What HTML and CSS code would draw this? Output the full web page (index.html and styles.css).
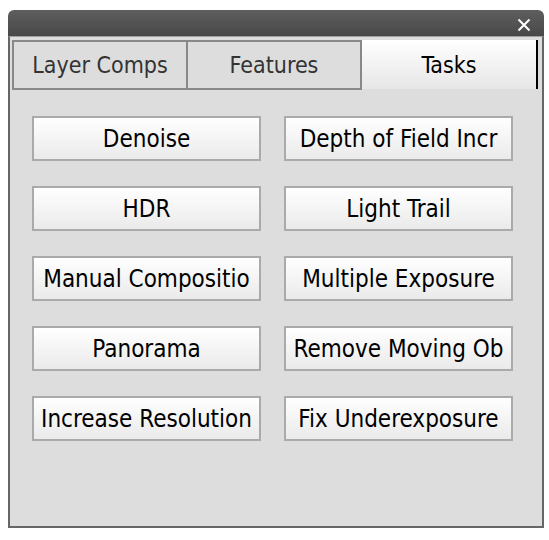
FILE: index.html
```html
<!DOCTYPE html>
<html>
<head>
<meta charset="utf-8">
<link rel="stylesheet" href="styles.css">
</head>
<body>
<div class="window">
  <div class="titlebar">
    <svg class="close" width="14" height="14" viewBox="0 0 14 14"><path d="M1.5 1.5 L12.5 12.5 M12.5 1.5 L1.5 12.5" stroke="#fff" stroke-width="2" fill="none"/></svg>
  </div>
  <div class="panel">
    <div class="tabs">
      <div class="tab">Layer Comps</div>
      <div class="tab">Features</div>
      <div class="tab active">Tasks</div>
    </div>
    <div class="grid">
      <div class="btn">Denoise</div>
      <div class="btn">Depth of Field Incr</div>
      <div class="btn">HDR</div>
      <div class="btn">Light Trail</div>
      <div class="btn">Manual Compositio</div>
      <div class="btn">Multiple Exposure</div>
      <div class="btn">Panorama</div>
      <div class="btn">Remove Moving Ob</div>
      <div class="btn">Increase Resolution</div>
      <div class="btn">Fix Underexposure</div>
    </div>
  </div>
</div>
</body>
</html>
```
FILE: styles.css
```css
html, body {
  margin: 0;
  padding: 0;
  background: #ffffff;
}
body {
  font-family: "DejaVu Sans Condensed", "DejaVu Sans", sans-serif;
  font-stretch: condensed;
}
.window {
  margin: 10px 0 0 8px;
  width: 536px;
  height: 518px;
  display: flex;
  flex-direction: column;
}
.titlebar {
  height: 26px;
  flex: none;
  background: linear-gradient(#5e5e5e, #484848);
  border-radius: 6px 6px 0 0;
  display: flex;
  justify-content: flex-end;
  align-items: center;
  padding-right: 13px;
  padding-top: 4px;
  box-sizing: border-box;
}
.close {
  display: block;
}
.panel {
  flex: 1;
  background: #dddddd;
  border: 2px solid #666666;
  border-top: 1px solid #a0a0a0;
  padding: 3px 0 0 2px;
}
.tabs {
  display: flex;
  height: 50px;
}
.tab {
  width: 176px;
  box-sizing: border-box;
  border: 2px solid #888888;
  display: flex;
  align-items: center;
  justify-content: center;
  font-size: 23px;
  color: #333333;
  background: #dddddd;
}
.tab + .tab {
  margin-left: -2px;
}
.tab.active {
  margin-left: 0;
  border: none;
  border-right: 2px solid #000000;
  color: #000000;
  background: linear-gradient(#ffffff, #e6e6e6);
  height: 49px;
}
.grid {
  display: grid;
  grid-template-columns: 229px 229px;
  grid-auto-rows: 45px;
  column-gap: 23px;
  row-gap: 25px;
  margin: 26px 0 0 20px;
}
.btn {
  box-sizing: border-box;
  border: 2px solid #aaaaaa;
  background: linear-gradient(#ffffff, #eaeaea);
  display: flex;
  align-items: center;
  justify-content: center;
  font-size: 24px;
  color: #000000;
  white-space: nowrap;
  overflow: hidden;
}
```
